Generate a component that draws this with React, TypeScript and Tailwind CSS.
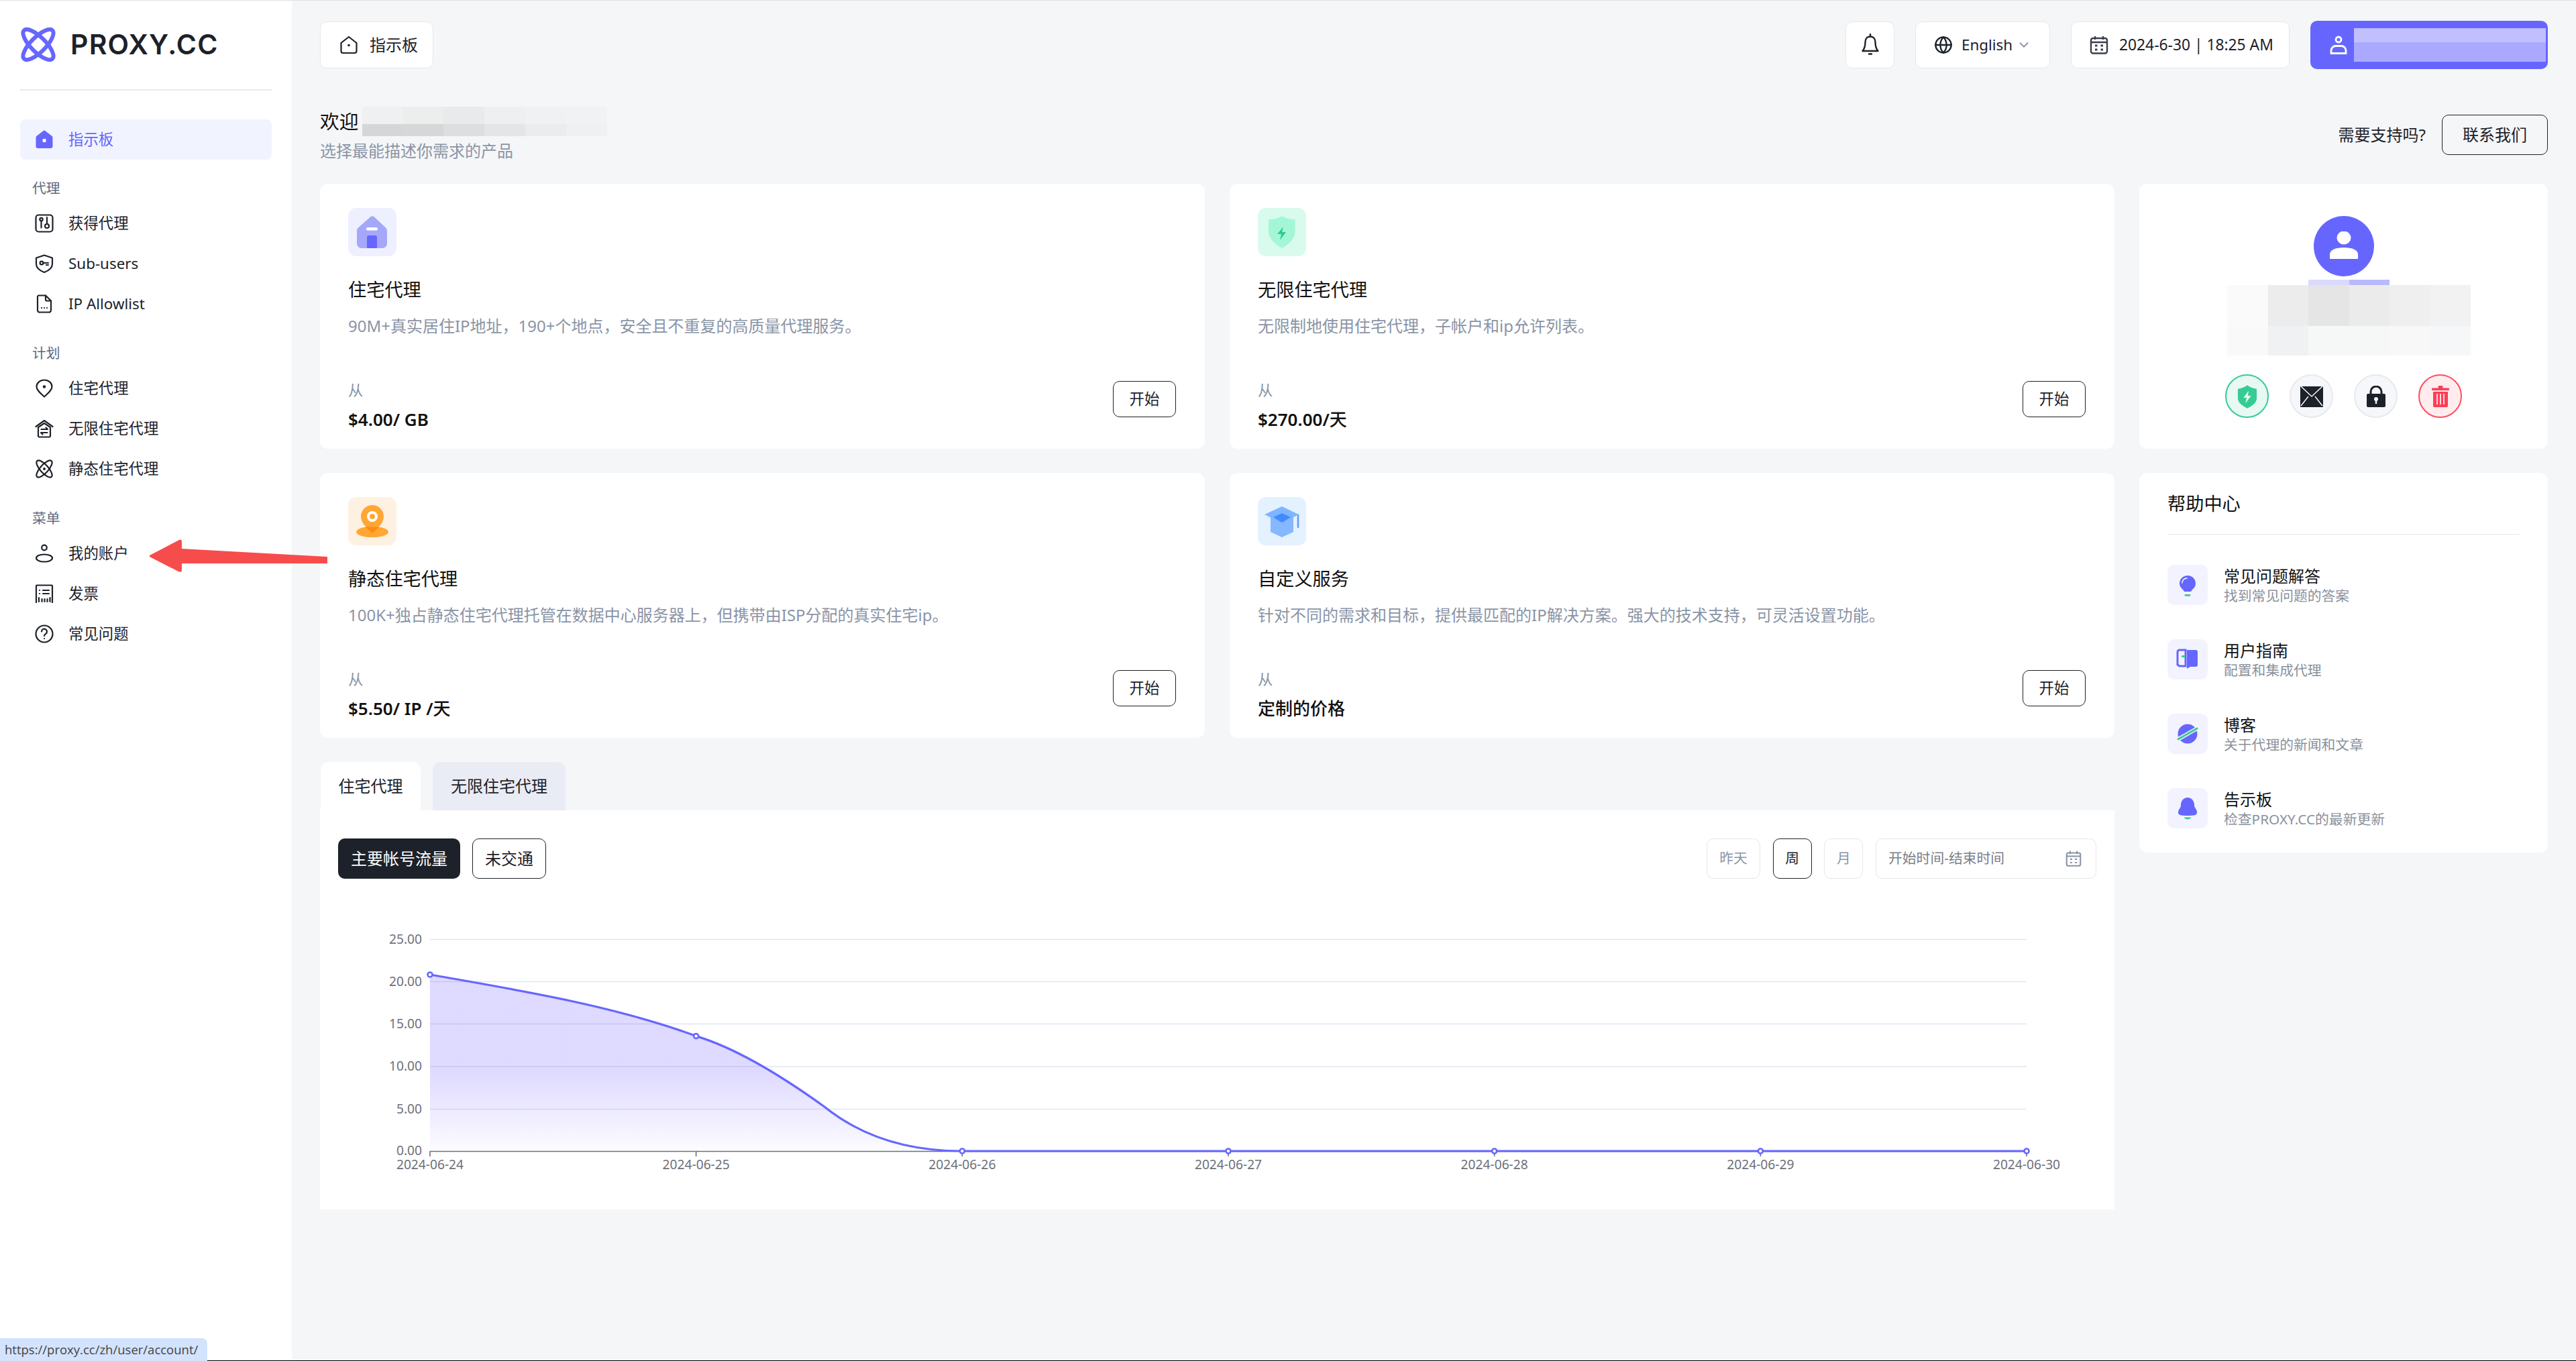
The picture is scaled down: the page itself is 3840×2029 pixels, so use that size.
import { ChevronDown, Globe } from "lucide-react";
import type { ReactNode } from "react";

const font = "font-['Noto_Sans','Noto_Sans_CJK_SC',sans-serif]";

// --- small icons ---

function Stroke({ children, className = "h-7 w-7" }: { children: ReactNode; className?: string }) {
  return (
    <svg viewBox="0 0 28 28" fill="none" stroke="currentColor" strokeWidth="2.200" strokeLinecap="round" strokeLinejoin="round" className={className}>
      {children}
    </svg>
  );
}

function HomeOutline() {
  return (
    <Stroke>
      <path d="M2.500 11 14 2l11.500 9v12a3 3 0 0 1-3 3h-17a3 3 0 0 1-3-3z" />
      <circle cx="14" cy="14.500" r="1.800" fill="currentColor" stroke="none" />
    </Stroke>
  );
}

const navIcons: Record<string, ReactNode> = {
  get: (
    <Stroke>
      <rect x="1.500" y="1.500" width="25" height="25" rx="4" />
      <circle cx="9.500" cy="8" r="2.200" />
      <path d="M9.500 10.500v10M18 5v9" />
      <circle cx="18" cy="18" r="3" />
    </Stroke>
  ),
  sub: (
    <Stroke>
      <path d="M14 1.500 26 5.500v9c0 5.500-5.500 10-12 12.500C7.500 24.500 2 20 2 14.500v-9z" />
      <circle cx="10" cy="13" r="2.400" />
      <path d="M12.500 13H20M17 16h3" />
    </Stroke>
  ),
  allow: (
    <Stroke>
      <path d="M5 1.500h11l8 8v14a3 3 0 0 1-3 3H7a3 3 0 0 1-3-3V3z" />
      <path d="M16 1.500v6a2 2 0 0 0 2 2h6" />
      <path d="M10 20h.1M14 20h.1M18 20h.1" />
    </Stroke>
  ),
  pin: (
    <Stroke>
      <path d="M14 26.500C8 21 2.500 16.500 2.500 11.500a11.500 10 0 0 1 23 0c0 5-5.500 9.500-11.500 15z" />
      <circle cx="14" cy="11.500" r="2.200" fill="currentColor" stroke="none" />
    </Stroke>
  ),
  house: (
    <Stroke>
      <path d="M1.500 11 14 2l12.500 9" />
      <path d="M5 12 14 6l9 6v13a1.500 1.500 0 0 1-1.500 1.500h-15A1.500 1.500 0 0 1 5 25z" />
      <path d="M9.500 15H19l-2.500-2.500M18.500 20H9l2.500 2.500" />
    </Stroke>
  ),
  atom: (
    <Stroke>
      <ellipse cx="14" cy="14" rx="6" ry="16" transform="rotate(-42 14 14)" />
      <ellipse cx="14" cy="14" rx="6" ry="16" transform="rotate(42 14 14)" />
      <circle cx="14" cy="14" r="2" fill="currentColor" stroke="none" />
    </Stroke>
  ),
  user: (
    <Stroke>
      <circle cx="14" cy="5.500" r="3.800" />
      <ellipse cx="14" cy="21" rx="12" ry="5.500" />
    </Stroke>
  ),
  invoice: (
    <Stroke>
      <path d="M2 27V2.500A1 1 0 0 1 3 1.500h22a1 1 0 0 1 1 1V27" />
      <path d="M7 9h.1M12 9h9M7 14h.1M12 14h9M6 20v6M10.500 22v4M14.500 22v4M18.500 22v4M22.500 20v6" />
    </Stroke>
  ),
  faq: (
    <Stroke>
      <circle cx="14" cy="14" r="12.500" />
      <path d="M10 10.500a4 4 0 1 1 6.500 3.200c-1.500 1-2.500 1.800-2.500 3.300" />
      <path d="M14 21h.1" />
    </Stroke>
  ),
};

function Logo() {
  return (
    <svg viewBox="0 0 54 53" className="h-[53px] w-[54px]" fill="none" stroke="#6666ff" strokeWidth="6">
      <ellipse cx="27" cy="26.500" rx="11" ry="30" transform="rotate(-45 27 26.500)" />
      <ellipse cx="27" cy="26.500" rx="11" ry="30" transform="rotate(45 27 26.500)" />
    </svg>
  );
}

function ProductIcon({ kind }: { kind: string }) {
  if (kind === "house")
    return (
      <svg viewBox="0 0 72 72" className="h-[72px] w-[72px] rounded-xl bg-[#eef0ff]">
        <path d="M33 13.500a4 4 0 0 1 6 0l17 16a6 6 0 0 1 2 4V53a7 7 0 0 1-7 7H20a7 7 0 0 1-7-7V33.500a6 6 0 0 1 2-4z" fill="#a5a8f9" />
        <rect x="27" y="29" width="17" height="4.500" rx="2" fill="#fff" />
        <path d="M28 44a3 3 0 0 1 3-3h9a3 3 0 0 1 3 3v16H28z" fill="#6666ff" />
      </svg>
    );
  if (kind === "shield")
    return (
      <svg viewBox="0 0 72 72" className="h-[72px] w-[72px] rounded-xl bg-[#d8fbee]">
        <path d="M36 12c4 3 12 5 19.500 5v18c0 10-8 19-19.500 25C25 54 16 45 16 35V17c8 0 16-2 20-5z" fill="#a3f7d6" />
        <path d="M38 28 29 39h6l-2 9 9-12h-6z" fill="#2ecc91" />
      </svg>
    );
  if (kind === "pin")
    return (
      <svg viewBox="0 0 72 72" className="h-[72px] w-[72px] rounded-xl bg-[#fff1e2]">
        <ellipse cx="36" cy="52" rx="24" ry="8" fill="#ffa733" />
        <path d="M36 12c10 0 17 8 17 17 0 10-9 17-17 25-8-8-17-15-17-25 0-9 7-17 17-17z" fill="#ffa733" />
        <path d="M26 44.500h20L36 54z" fill="#ff8a10" />
        <circle cx="36" cy="29" r="8" fill="#fff" />
        <circle cx="36" cy="29" r="4" fill="#ffa733" />
      </svg>
    );
  return (
    <svg viewBox="0 0 72 72" className="h-[72px] w-[72px] rounded-xl bg-[#e4f1ff]">
      <path d="M19 30h34v22L36 60 19 52z" fill="#85b8ff" />
      <path d="M36 14 61 26 36 39 10 26z" fill="#7fb5ff" />
      <path d="M36 24 49 30 36 38 23 30z" fill="#408cff" />
      <path d="M60 27v18" stroke="#5c9eff" strokeWidth="2.500" strokeLinecap="round" />
    </svg>
  );
}

const helpIcons: Record<string, ReactNode> = {
  bulb: (
    <>
      <path d="M30 17c7 0 12 5 12 12 0 6-5 8-7 12H25c-2-4-7-6-7-12 0-7 5-12 12-12z" fill="#6666ff" transform="translate(0 -1)" />
      <path d="M22 27c0-4 3-7 7-7" stroke="#fff" strokeWidth="1.500" fill="none" strokeLinecap="round" />
      <rect x="25.500" y="44" width="9" height="2.800" rx="1.400" fill="#35cc94" />
    </>
  ),
  book: (
    <>
      <path d="M15 19a3 3 0 0 1 3-3h9v24H18l-3-2z" fill="none" stroke="#6666ff" strokeWidth="3" />
      <path d="M29 16h13a3 3 0 0 1 3 3v19a3 3 0 0 1-3 3H34l-5 3z" fill="#6666ff" />
      <rect x="21" y="24" width="5.500" height="3" rx="1" fill="#35cc94" />
    </>
  ),
  planet: (
    <>
      <circle cx="30" cy="30" r="14.500" fill="#6666ff" />
      <path d="M16 38 44 22" stroke="#f3f3ff" strokeWidth="6" />
      <path d="M16 38 44 22" stroke="#35cc94" strokeWidth="3" strokeLinecap="round" />
    </>
  ),
  bell: (
    <>
      <path d="M30 14c6 0 10 5 10 11 0 5 4 6 4 11 0 4-3 5-14 5s-14-1-14-5c0-5 4-6 4-11 0-6 4-11 10-11z" fill="#6666ff" />
      <path d="M25 43.500h10a5 3 0 0 1-10 0z" fill="#35cc94" />
    </>
  ),
};

// --- data ---

const navGroups = [
  { label: "代理", top: "mt-[31px]", items: [["get", "获得代理"], ["sub", "Sub-users"], ["allow", "IP Allowlist"]] },
  { label: "计划", top: "mt-[32px]", items: [["pin", "住宅代理"], ["house", "无限住宅代理"], ["atom", "静态住宅代理"]] },
  { label: "菜单", top: "mt-[32px]", items: [["user", "我的账户"], ["invoice", "发票"], ["faq", "常见问题"]] },
];

const products = [
  { icon: "house", title: "住宅代理", desc: "90M+真实居住IP地址，190+个地点，安全且不重复的高质量代理服务。", price: "$4.00/ GB", unit: "" },
  { icon: "shield", title: "无限住宅代理", desc: "无限制地使用住宅代理，子帐户和ip允许列表。", price: "$270.00/", unit: "天" },
  { icon: "pin", title: "静态住宅代理", desc: "100K+独占静态住宅代理托管在数据中心服务器上，但携带由ISP分配的真实住宅ip。", price: "$5.50/ IP /", unit: "天" },
  { icon: "cap", title: "自定义服务", desc: "针对不同的需求和目标，提供最匹配的IP解决方案。强大的技术支持，可灵活设置功能。", price: "", unit: "定制的价格" },
];

const helpItems = [
  ["bulb", "常见问题解答", "找到常见问题的答案"],
  ["book", "用户指南", "配置和集成代理"],
  ["planet", "博客", "关于代理的新闻和文章"],
  ["bell", "告示板", "检查PROXY.CC的最新更新"],
];

const welcomeBlur = [
  ["#eff0f1", "#d4d6d8"],
  ["#eceded", "#d5d7d9"],
  ["#e9eaeb", "#dcdee0"],
  ["#eeeff0", "#e4e5e7"],
  ["#f0f1f2", "#ebecee"],
  ["#f1f2f3", "#eff0f2"],
];

const cardBlur = [
  ["#fafafa", "#f9f9f9"],
  ["#ececec", "#f0f1f2"],
  ["#e5e5e5", "#f6f7f7"],
  ["#ebebeb", "#f6f7f7"],
  ["#efefef", "#f7f8f7"],
  ["#f2f2f2", "#f6f7f8"],
];

const days = ["2024-06-24", "2024-06-25", "2024-06-26", "2024-06-27", "2024-06-28", "2024-06-29", "2024-06-30"];
const ticks = [
  ["25.00", 1399.5],
  ["20.00", 1462.5],
  ["15.00", 1525.5],
  ["10.00", 1589],
  ["5.00", 1652.5],
] as const;
const pointX = days.map((_, i) => 641 + i * 396.67);
const pointY = [1452, 1543.6, 1715, 1715, 1715, 1715, 1715];
const curve = "M641 1452C780 1476 920 1500 1037.700 1543.600C1105 1564 1175 1610 1229 1649C1280 1690 1345 1715 1434.300 1715";

// --- parts ---

function Sidebar() {
  return (
    <aside className="w-[435px] shrink-0 bg-white px-[30px]">
      <div className="mt-[39px] flex h-[53px] items-center gap-[21px]">
        <Logo />
        <span className="font-['Inter',sans-serif] text-[41px] font-semibold leading-none tracking-[1.2px] text-[#1d2129]">PROXY.CC</span>
      </div>
      <div className="mt-[40px] h-[2px] bg-[#e8e9ee]" />
      <div className="mt-[43px] flex h-[60px] items-center gap-[22px] rounded-lg bg-[#f1f3ff] pl-[22px] text-[22.4px] text-[#6666ff]">
        <svg viewBox="0 0 28 28" className="h-7 w-7">
          <path d="M12 1.500a3 3 0 0 1 4 0l9 7a3 3 0 0 1 1.500 2.500v13a3 3 0 0 1-3 3h-19a3 3 0 0 1-3-3V11A3 3 0 0 1 3 8.500z" fill="#6666ff" />
          <rect x="11.500" y="13" width="5" height="5" rx="1" fill="#fff" />
        </svg>
        指示板
      </div>
      {navGroups.map((group) => (
        <div key={group.label} className={group.top}>
          <div className="h-[22px] pl-[18px] text-[20.8px] leading-[22px] text-[#5d6b82]">{group.label}</div>
          <div className="mt-[12px]">
            {group.items.map(([icon, label]) => (
              <div key={label} className="flex h-[60px] items-center gap-[22px] pl-[22px] text-[22.4px] text-[#1d2129]">
                {navIcons[icon]}
                {label}
              </div>
            ))}
          </div>
        </div>
      ))}
    </aside>
  );
}

function TopBar() {
  const box = "flex h-[70px] items-center rounded-[10px] border border-[#e6e7eb] bg-white";
  return (
    <div className="flex items-center justify-between">
      <div className={`${box} w-[169px] gap-[17px] pl-[28px] text-[24px] text-[#1d2129]`}>
        <HomeOutline />
        指示板
      </div>
      <div className="flex items-center gap-[31px]">
        <div className={`${box} w-[73px] justify-center text-[#1d2129]`}>
          <svg viewBox="0 0 26 34" fill="none" stroke="currentColor" strokeWidth="2.400" strokeLinecap="round" strokeLinejoin="round" className="h-[34px] w-[26px]">
            <path d="M13 4.500c-5 0-7.500 4-7.500 8.500 0 6-1.500 10-4 13h23c-2.500-3-4-7-4-13 0-4.500-2.500-8.500-7.500-8.500z" />
            <path d="M13 1v2M11 30.500h4" />
          </svg>
        </div>
        <div className={`${box} w-[201px] pl-[27px] text-[22.4px] text-[#1d2129]`}>
          <Globe className="h-7 w-7" strokeWidth={2} />
          <span className="ml-[13px]">English</span>
          <ChevronDown className="ml-[6px] h-[22px] w-[22px] text-[#8a94a6]" strokeWidth={2} />
        </div>
        <div className={`${box} w-[326px] pl-[27px] text-[22.8px] text-[#1d2129]`}>
          <svg viewBox="0 0 28 28" className="h-7 w-7" fill="none" stroke="#3a3f4b" strokeWidth="2.400">
            <rect x="2" y="4" width="24" height="22.500" rx="3" />
            <path d="M2 10h24M8 1v5M20 1v5" />
            <path d="M8 15h3.500M16.500 15H20M8 21h3.500M16.500 21H20" strokeWidth="3" />
          </svg>
          <span className="ml-[16px]">2024-6-30 | 18:25 AM</span>
        </div>
        <div className="flex h-[72px] w-[354px] items-center rounded-[10px] bg-[#6666ff] pl-[28px] pr-[3px] text-white">
          <svg viewBox="0 0 28 28" className="h-7 w-7 shrink-0" fill="none" stroke="#fff" strokeWidth="2.800">
            <circle cx="14" cy="6" r="4" />
            <path d="M3 26.500v-4a7 7 0 0 1 7-7h8a7 7 0 0 1 7 7v4z" />
          </svg>
          <div className="ml-[9px] flex h-[50px] flex-1 flex-col">
            <div className="h-[21px] bg-[#c2bfff]" />
            <div className="flex-1 bg-[#aaa9ff]" />
          </div>
        </div>
      </div>
    </div>
  );
}

function Welcome() {
  return (
    <div className="mb-[23px] mt-[48px] flex h-[100px] items-center justify-between">
      <div>
        <div className="flex h-[44px] items-center text-[28.800px] leading-[44px] text-[#111]">
          欢迎
          <div className="ml-[5px] flex h-[44px] w-[365px]">
            {welcomeBlur.map(([top, bottom], i) => (
              <div key={i} className="flex flex-1 flex-col">
                <div className="h-[26px]" style={{ background: top }} />
                <div className="flex-1" style={{ background: bottom }} />
              </div>
            ))}
          </div>
        </div>
        <div className="mt-[4px] text-[24px] leading-[36px] text-[#8a94a6]">选择最能描述你需求的产品</div>
      </div>
      <div className="flex items-center gap-[24px] text-[24px] text-[#1d2129]">
        需要支持吗?
        <div className="flex h-[60px] w-[158px] items-center justify-center rounded-[10px] border border-[#1d2129]">联系我们</div>
      </div>
    </div>
  );
}

function ProductCard({ icon, title, desc, price, unit }: (typeof products)[number]) {
  return (
    <div className="flex h-[395px] flex-col rounded-xl bg-white pb-[24px] pl-[42px] pr-[43px] pt-[36px]">
      <ProductIcon kind={icon} />
      <div className="mt-[30px] text-[27.200px] leading-[40px] text-[#111]">{title}</div>
      <div className="mt-[16px] text-[24px] leading-[36px] text-[#8a94a6]">{desc}</div>
      <div className="mt-auto flex items-end justify-between">
        <div>
          <div className="text-[22.400px] leading-[32px] text-[#8a94a6]">从</div>
          <div className="mt-[7px] text-[26px] leading-[40px] text-[#111]">
            <span className="font-semibold">{price}</span>
            <span className="font-medium">{unit}</span>
          </div>
        </div>
        <div className="mb-[23px] flex h-[54px] w-[94px] items-center justify-center rounded-[10px] border border-[#1d2129] text-[22.400px] text-[#1d2129]">开始</div>
      </div>
    </div>
  );
}

function TrafficChart() {
  return (
    <svg viewBox="477 1340 2675 420" className="mt-[31px] block h-[420px] w-[2675px]">
      <defs>
        <linearGradient id="area" x1="0" y1="1452" x2="0" y2="1715" gradientUnits="userSpaceOnUse">
          <stop offset="0" stopColor="#7864ff" stopOpacity="0.24" />
          <stop offset="0.55" stopColor="#7864ff" stopOpacity="0.24" />
          <stop offset="1" stopColor="#7864ff" stopOpacity="0.02" />
        </linearGradient>
      </defs>
      {ticks.map(([label, y]) => (
        <g key={label}>
          <line x1="641" x2="3021" y1={y} y2={y} stroke="#e0e6f1" strokeWidth="1.600" />
          <text x="629" y={y + 6} textAnchor="end" fontSize="19.200" fill="#6e7079">{label}</text>
        </g>
      ))}
      <text x="629" y="1721" textAnchor="end" fontSize="19.200" fill="#6e7079">0.00</text>
      <path d={`${curve}V1715H641Z`} fill="url(#area)" />
      <line x1="641" x2="3021" y1="1715.500" y2="1715.500" stroke="#6e7079" strokeWidth="1.600" />
      {days.map((day, i) => (
        <g key={day}>
          <line x1={pointX[i]} x2={pointX[i]} y1="1715" y2="1723" stroke="#6e7079" strokeWidth="1.600" />
          <text x={pointX[i]} y="1742" textAnchor="middle" fontSize="19.200" fill="#6e7079">{day}</text>
        </g>
      ))}
      <path d={`${curve}H3021`} fill="none" stroke="#6666ff" strokeWidth="3.200" />
      {days.map((day, i) => (
        <circle key={day} cx={pointX[i]} cy={pointY[i]} r="3.500" fill="#fff" stroke="#6666ff" strokeWidth="2.600" />
      ))}
    </svg>
  );
}

function TrafficPanel() {
  const idle = "flex h-[60px] items-center justify-center rounded-[10px] border border-[#e6e7eb] text-[20.800px] text-[#8a94a6]";
  return (
    <div className="mt-[36px]">
      <div className="flex gap-[18px] pl-[1px] text-[24px] text-[#1d2129]">
        <div className="flex h-[72px] w-[149px] items-center justify-center rounded-t-xl bg-white">住宅代理</div>
        <div className="flex h-[72px] w-[198px] items-center justify-center rounded-t-xl bg-[#e9ecf4]">无限住宅代理</div>
      </div>
      <div className="h-[595px] bg-white">
        <div className="flex items-center justify-between px-[27px] pt-[42px]">
          <div className="flex gap-[18px] text-[24px]">
            <div className="flex h-[60px] w-[182px] items-center justify-center rounded-[10px] bg-[#1d2129] text-white">主要帐号流量</div>
            <div className="flex h-[60px] w-[110px] items-center justify-center rounded-[10px] border border-[#1d2129] text-[#1d2129]">未交通</div>
          </div>
          <div className="flex gap-[18.700px]">
            <div className={`${idle} w-[80px]`}>昨天</div>
            <div className="flex h-[60px] w-[58px] items-center justify-center rounded-[10px] border border-[#1d2129] text-[20.800px] text-[#1d2129]">周</div>
            <div className={`${idle} w-[58px]`}>月</div>
            <div className={`${idle} w-[329px] !justify-between pl-[18px] pr-[21px] !text-[#7b7f87]`}>
              开始时间-结束时间
              <svg viewBox="0 0 28 28" className="h-[26px] w-[24px]" fill="none" stroke="#8a94a6" strokeWidth="2.400">
                <rect x="2" y="4" width="24" height="22.500" rx="3" />
                <path d="M2 10h24M8 1v5M20 1v5" />
                <path d="M8 15h3.500M16.500 15H20M8 21h3.500M16.500 21H20" strokeWidth="2.500" />
              </svg>
            </div>
          </div>
        </div>
        <TrafficChart />
      </div>
    </div>
  );
}

function ProfileCard() {
  const circle = "flex h-[65px] w-[65px] items-center justify-center rounded-full border-2";
  return (
    <div className="h-[395px] rounded-xl bg-white pt-[48px]">
      <div className="flex flex-col items-center">
        <div className="flex h-[90px] w-[90px] items-center justify-center rounded-full bg-[#6666ff]">
          <svg viewBox="0 0 44 44" className="h-[44px] w-[44px]" fill="#fff">
            <ellipse cx="22" cy="9.500" rx="10.500" ry="10" />
            <path d="M1 41v-7c0-6 8-10 21-10s21 4 21 10v7z" />
          </svg>
        </div>
        <div className="ml-[131px] mt-[5px] w-[363px] self-start">
          <div className="ml-[121px] flex h-[8px] w-[121px]">
            <div className="flex-1 bg-[#dbdafe]" />
            <div className="flex-1 bg-[#b9b9fc]" />
          </div>
          <div className="flex h-[105px]">
            {cardBlur.map(([top, bottom], i) => (
              <div key={i} className="flex flex-1 flex-col">
                <div className="h-[61px]" style={{ background: top }} />
                <div className="flex-1" style={{ background: bottom }} />
              </div>
            ))}
          </div>
        </div>
        <div className="mt-[28px] flex gap-[31px]">
          <div className={`${circle} border-[#35cc94] bg-[#e8f8f3]`}>
            <svg viewBox="0 0 32 38" className="h-[36px] w-[30px]">
              <path d="M16 1c4 3 9 5 15 6v15c0 7-7 12-15 16C8 34 1 29 1 22V7c6-1 11-3 15-6z" fill="#35cc94" />
              <path d="M18 10 10 21h5l-2 9 9-12h-5z" fill="#e8f8f3" />
            </svg>
          </div>
          <div className={`${circle} border-[#e8e9ee] bg-[#f6f7fb]`}>
            <svg viewBox="0 0 34 32" className="h-[32px] w-[34px]">
              <rect y="1" width="34" height="31" rx="1" fill="#1d2129" />
              <path d="M1 1 17 16 33 1M1 30l11-14M33 30 22 16" fill="none" stroke="#f6f7fb" strokeWidth="1.500" />
            </svg>
          </div>
          <div className={`${circle} border-[#e8e9ee] bg-[#f6f7fb]`}>
            <svg viewBox="0 0 28 32" className="h-[32px] w-[28px]">
              <path d="M6 14V9a8 8 0 0 1 16 0v5" fill="none" stroke="#1d2129" strokeWidth="3" />
              <rect y="12" width="28" height="20" rx="2" fill="#1d2129" />
              <circle cx="14" cy="20" r="3" fill="#f6f7fb" />
              <rect x="12.800" y="20" width="2.400" height="7" fill="#f6f7fb" />
            </svg>
          </div>
          <div className={`${circle} border-[#ff4d5f] bg-[#ffecef]`}>
            <svg viewBox="0 0 26 32" className="h-[32px] w-[26px]" fill="#ff3d55">
              <rect y="3.500" width="26" height="3.500" rx="1" />
              <rect x="9.500" width="7" height="4" rx="1.500" />
              <path d="M2 9h22v21a2 2 0 0 1-2 2H4a2 2 0 0 1-2-2z" />
              <path d="M8 12v16M13 12v16M18 12v16" stroke="#ffecef" strokeWidth="1.800" />
            </svg>
          </div>
        </div>
      </div>
    </div>
  );
}

function HelpCard() {
  return (
    <div className="mt-[36px] h-[566px] rounded-xl bg-white px-[42px] pt-[26px]">
      <div className="text-[27.200px] leading-[40px] text-[#111]">帮助中心</div>
      <div className="mt-[25px] h-[1px] bg-[#e6e8ec]" />
      <div className="mt-[45px] flex flex-col gap-[51px]">
        {helpItems.map(([icon, title, sub]) => (
          <div key={title} className="flex items-center gap-[24px]">
            <svg viewBox="0 0 60 60" className="h-[60px] w-[60px] rounded-[10px] bg-[#f3f3ff]">
              {helpIcons[icon]}
            </svg>
            <div>
              <div className="text-[24px] leading-[32px] text-[#111]">{title}</div>
              <div className="text-[20.800px] leading-[26px] text-[#8a919c]">{sub}</div>
            </div>
          </div>
        ))}
      </div>
    </div>
  );
}

export default function App() {
  return (
    <div className={`${font} relative flex h-[2029px] overflow-hidden border-t border-[#dfe1e5] bg-[#f5f6f8]`}>
      <Sidebar />
      <main className="flex-1 px-[42px] pt-[30px]">
        <TopBar />
        <Welcome />
        <div className="flex gap-[37px]">
          <div className="w-[2675px]">
            <div className="grid grid-cols-2 gap-x-[37px] gap-y-[36px]">
              {products.map((p) => (
                <ProductCard key={p.title} {...p} />
              ))}
            </div>
            <TrafficPanel />
          </div>
          <div className="w-[609px]">
            <ProfileCard />
            <HelpCard />
          </div>
        </div>
      </main>

      {/* annotation arrow drawn over the screenshot */}
      <svg viewBox="0 0 268 52" className="absolute left-[221px] top-[801px] h-[52px] w-[268px]">
        <path d="M2 26 46 3q4-2 4 3v10l217 12v10H50v10q0 4-5 2L2 28z" fill="#f74c4c" />
      </svg>

      {/* browser status bubble */}
      <div className="absolute bottom-0 left-0 flex h-[34px] w-[309px] items-center rounded-tr-lg bg-[#d3e3fd] pl-[7px] font-['Open_Sans',sans-serif] text-[18.500px] text-[#444]">
        https://proxy.cc/zh/user/account/
      </div>
      <div className="absolute bottom-0 left-[309px] right-0 h-[1px] bg-black" />
    </div>
  );
}
